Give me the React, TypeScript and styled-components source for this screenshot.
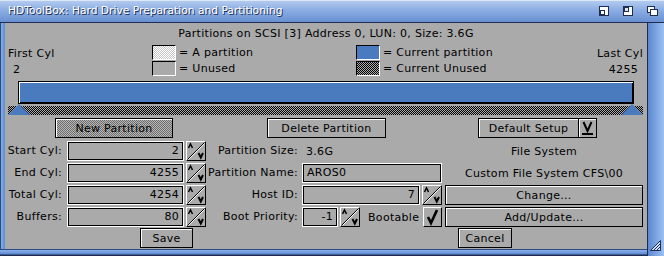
import React from "react";
import styled, { createGlobalStyle } from "styled-components";

const GRAY = "#aaaaaa";
const BLUE = "#4a7bbf";
const NAVY = "#1c2c52";

const checker = (a: string, b: string) =>
    `repeating-conic-gradient(${a} 0% 25%, ${b} 0% 50%) 0 0 / 2px 2px`;

const GlobalStyle = createGlobalStyle`
    * { box-sizing: border-box; }
    html, body { margin: 0; padding: 0; background: #6d98d8; }
`;

const Window = styled.div`
    width: 664px;
    height: 256px;
    display: grid;
    grid-template-columns: 5px 642px 17px;
    grid-template-rows: 23px 226px 7px;
    background: #6d98d8;
    font-family: "DejaVu Sans", Verdana, sans-serif;
    font-size: 11px;
    letter-spacing: 0.3px;
    color: #000;
    overflow: hidden;
`;

const TitleBar = styled.div`
    grid-column: 1 / -1;
    display: flex;
    align-items: center;
    padding: 0 6px 1px 8px;
    background: linear-gradient(180deg, #b6cdef 0%, #8caee3 45%, #6890d2 100%);
    border-bottom: 1px solid ${NAVY};
    box-shadow: inset 0 1px #dce7f8;
`;

const Title = styled.span`
    color: #fff;
    font-size: 10.7px;
    letter-spacing: 0;
    text-shadow: 1px 1px 0 ${NAVY};
    white-space: nowrap;
`;

const Gadgets = styled.div`
    margin-left: auto;
    display: flex;
    gap: 12px;
    align-items: center;

    svg {
        display: block;
    }
`;

const LeftEdge = styled.div`
    grid-row: 2 / 4;
    grid-column: 1;
    background: linear-gradient(90deg, #2c4a86 0 1px, #86aee8 1px, #5f8bd0 100%);
`;

const BottomEdge = styled.div`
    grid-row: 3;
    grid-column: 1 / 3;
    background: linear-gradient(180deg, #2c4a86 0 1px, #8cb2ec 1px, #5f8bd0 5px, ${NAVY} 6px);
`;

const RightEdge = styled.div`
    grid-row: 2 / 4;
    grid-column: 3;
    display: flex;
    align-items: flex-end;
    justify-content: center;
    padding-bottom: 5px;
    background: linear-gradient(90deg, ${NAVY} 0 1px, #5a87cf 1px, #9cc0f2 100%);
`;

const Content = styled.div`
    grid-row: 2;
    grid-column: 2;
    background: ${GRAY};
    display: flex;
    flex-direction: column;
`;

const Header = styled.div`
    margin-top: 5px;
    height: 12px;
    line-height: 12px;
    text-align: center;
    white-space: nowrap;
`;

const Legend = styled.div`
    display: grid;
    grid-template-columns: 144px 204px 1fr auto;
    grid-template-rows: 16px 16px;
    margin-top: 5px;
    padding: 0 4px 0 3px;
    align-items: center;
    white-space: nowrap;
`;

const CylValue = styled.span<{ $right?: boolean }>`
    text-align: ${({ $right }) => ($right ? "right" : "left")};
    padding: ${({ $right }) => ($right ? "0 5px 0 0" : "0 0 0 5px")};
`;

const CylLabel = styled.span<{ $right?: boolean }>`
    text-align: ${({ $right }) => ($right ? "right" : "left")};
`;

const LegendItem = styled.div`
    display: flex;
    align-items: flex-start;
    gap: 3px;
    height: 16px;
    line-height: 15px;
`;

const Swatch = styled.span<{ $fill: string }>`
    width: 24px;
    height: 15px;
    flex: none;
    border: 1px solid;
    border-color: #000 #fff #fff #000;
    background: ${({ $fill }) => $fill};
`;

const PartitionBar = styled.div`
    margin: 4px 13px 0;
    height: 23px;
    border: 1px solid #000;
    background: ${BLUE};
    box-shadow: inset 1px 1px 0 #fff, inset -1px -1px 0 #000;
`;

const Track = styled.div`
    position: relative;
    height: 11px;
    margin: 0 4px 0 3px;
    padding-top: 2px;
`;

const Strip = styled.div`
    height: 9px;
    background: ${checker("#000", GRAY)};
`;

const Knob = styled.svg<{ $side: "left" | "right" }>`
    position: absolute;
    top: 0;
    ${({ $side }) => ($side === "left" ? "left: 0;" : "right: 0;")}
    display: block;
`;

const ButtonRow = styled.div`
    display: flex;
    margin-top: 3px;
    height: 20px;
    padding-left: 50px;
`;

const Button = styled.button<{ $w: number; $ml?: number; $dither?: boolean }>`
    width: ${({ $w }) => $w}px;
    height: 20px;
    margin: 0 0 0 ${({ $ml }) => $ml ?? 0}px;
    padding: 0;
    font: inherit;
    letter-spacing: inherit;
    color: #000;
    border: 1px solid #000;
    background: ${({ $dither }) => ($dither ? checker("#6c6c6c", "#b8b8b8") : GRAY)};
    box-shadow: inset 1px 1px 0 #fff;
    text-align: center;
    white-space: nowrap;
    display: flex;
    align-items: center;
    justify-content: center;
`;

const CycleButton = styled(Button)`
    justify-content: flex-start;
`;

const CycleLabel = styled.span`
    width: 99px;
    text-align: center;
`;

const CycleGlyph = styled.span`
    flex: 1;
    height: 100%;
    display: flex;
    align-items: center;
    justify-content: center;
    border-left: 1px solid #000;
    box-shadow: inset 1px 0 0 #fff;
`;

const FormGrid = styled.div`
    display: grid;
    grid-template-columns: 62px 139px 96px 143px 198px;
    grid-auto-rows: 20px;
    row-gap: 2px;
    margin-top: 3px;
`;

const Label = styled.div<{ $pr: number }>`
    text-align: right;
    padding-right: ${({ $pr }) => $pr}px;
    line-height: 20px;
    white-space: nowrap;
`;

const FieldGroup = styled.div`
    display: flex;
    gap: 2px;
`;

const MidCell = styled.div`
    display: flex;
    align-items: center;
    padding-right: 3px;
    white-space: nowrap;
`;

const Field = styled.div<{ $w?: number; $left?: boolean }>`
    ${({ $w }) => ($w ? `width: ${$w}px;` : "flex: 1;")}
    height: 20px;
    border: 1px solid #fff;
    box-shadow: inset 0 0 0 1px #000;
    padding: 0 4px;
    line-height: 18px;
    text-align: ${({ $left }) => ($left ? "left" : "right")};
    white-space: nowrap;
`;

const Value = styled.span`
    padding-left: 4px;
`;

const BevelBox = styled.div<{ $w: number }>`
    width: ${({ $w }) => $w}px;
    height: 20px;
    flex: none;
    border: 1px solid;
    border-color: #fff #000 #000 #fff;

    svg {
        display: block;
    }
`;

const RightCell = styled.div`
    display: flex;
    align-items: center;
    justify-content: center;
    white-space: nowrap;
`;

const WideButton = styled(Button)`
    width: 198px;
`;

const BootText = styled.span`
    margin-left: 8px;
`;

const CheckBox = styled(BevelBox)`
    margin-left: auto;
`;

const BottomRow = styled.div`
    display: flex;
    margin-top: 1px;
    height: 20px;
    padding-left: 135px;
    gap: 265px;
`;

const Spinner: React.FC = () => (
    <BevelBox $w={20}>
        <svg width="18" height="18" viewBox="0 0 18 18">
            <line x1="0.5" y1="17.5" x2="17.5" y2="0.5" stroke="#000" strokeWidth="1" />
            <line x1="1.5" y1="17.5" x2="17.5" y2="1.5" stroke="#fff" strokeWidth="1" />
            <polyline points="1.5,6 3.5,2 5.5,6" fill="none" stroke="#000" strokeWidth="1.5" />
            <polyline points="11.5,11 13.8,15.5 16,11" fill="none" stroke="#000" strokeWidth="2" />
        </svg>
    </BevelBox>
);

const Triangle: React.FC<{ side: "left" | "right" }> = ({ side }) => (
    <Knob $side={side} width="22" height="11" viewBox="0 0 22 11">
        <polygon points="11,0 22,11 0,11" fill={BLUE} />
    </Knob>
);

export default function App() {
    return (
        <>
            <GlobalStyle />
            <Window>
                <TitleBar>
                    <Title>HDToolBox: Hard Drive Preparation and Partitioning</Title>
                    <Gadgets>
                        <svg width="10" height="10" viewBox="0 0 10 10">
                            <rect x="0.5" y="0.5" width="9" height="9" fill="#fff" stroke={NAVY} />
                            <rect x="1" y="4" width="5" height="5" fill={NAVY} />
                            <rect x="2" y="5" width="3" height="3" fill="#fff" />
                        </svg>
                        <svg width="10" height="10" viewBox="0 0 10 10" style={{ marginLeft: 2 }}>
                            <rect x="0.5" y="0.5" width="9" height="9" fill="#fff" stroke={NAVY} />
                            <rect x="1.5" y="1.5" width="4" height="4" fill="#dfe6f0" stroke={NAVY} />
                        </svg>
                        <svg width="11" height="10" viewBox="0 0 11 10" style={{ marginLeft: 2 }}>
                            <rect x="0.5" y="0.5" width="7" height="6" fill="#fff" stroke={NAVY} />
                            <rect x="3.5" y="3.5" width="7" height="6" fill="#fff" stroke={NAVY} />
                        </svg>
                    </Gadgets>
                </TitleBar>
                <LeftEdge />
                <Content>
                    <Header>Partitions on SCSI [3] Address 0, LUN: 0, Size: 3.6G</Header>
                    <Legend>
                        <CylLabel>First Cyl</CylLabel>
                        <LegendItem>
                            <Swatch $fill={checker("#ffffff", "#c8c8c8")} />= A partition
                        </LegendItem>
                        <LegendItem>
                            <Swatch $fill={BLUE} />= Current partition
                        </LegendItem>
                        <CylLabel $right>Last Cyl</CylLabel>
                        <CylValue>2</CylValue>
                        <LegendItem>
                            <Swatch $fill={GRAY} />= Unused
                        </LegendItem>
                        <LegendItem>
                            <Swatch $fill={checker("#000", GRAY)} />= Current Unused
                        </LegendItem>
                        <CylValue $right>4255</CylValue>
                    </Legend>
                    <PartitionBar />
                    <Track>
                        <Strip />
                        <Triangle side="left" />
                        <Triangle side="right" />
                    </Track>
                    <ButtonRow>
                        <Button $w={118} $dither>New Partition</Button>
                        <Button $w={119} $ml={94}>Delete Partition</Button>
                        <CycleButton $w={119} $ml={92}>
                            <CycleLabel>Default Setup</CycleLabel>
                            <CycleGlyph>
                                <svg width="11" height="14" viewBox="0 0 11 14">
                                    <polyline points="1.5,1 5.5,10 9.5,1" fill="none" stroke="#000" strokeWidth="2" />
                                    <rect x="0" y="12" width="11" height="2" fill="#000" />
                                </svg>
                            </CycleGlyph>
                        </CycleButton>
                    </ButtonRow>
                    <FormGrid>
                        <Label $pr={5}>Start Cyl:</Label>
                        <FieldGroup>
                            <Field>2</Field>
                            <Spinner />
                        </FieldGroup>
                        <Label $pr={4}>Partition Size:</Label>
                        <MidCell>
                            <Value>3.6G</Value>
                        </MidCell>
                        <RightCell>File System</RightCell>

                        <Label $pr={5}>End Cyl:</Label>
                        <FieldGroup>
                            <Field>4255</Field>
                            <Spinner />
                        </FieldGroup>
                        <Label $pr={4}>Partition Name:</Label>
                        <MidCell>
                            <Field $left>AROS0</Field>
                        </MidCell>
                        <RightCell>Custom File System CFS\00</RightCell>

                        <Label $pr={5}>Total Cyl:</Label>
                        <FieldGroup>
                            <Field>4254</Field>
                            <Spinner />
                        </FieldGroup>
                        <Label $pr={4}>Host ID:</Label>
                        <MidCell>
                            <FieldGroup style={{ flex: 1 }}>
                                <Field>7</Field>
                                <Spinner />
                            </FieldGroup>
                        </MidCell>
                        <RightCell>
                            <WideButton $w={198}>Change...</WideButton>
                        </RightCell>

                        <Label $pr={5}>Buffers:</Label>
                        <FieldGroup>
                            <Field>80</Field>
                            <Spinner />
                        </FieldGroup>
                        <Label $pr={4}>Boot Priority:</Label>
                        <MidCell>
                            <FieldGroup>
                                <Field $w={36}>-1</Field>
                                <Spinner />
                            </FieldGroup>
                            <BootText>Bootable</BootText>
                            <CheckBox $w={19}>
                                <svg width="17" height="18" viewBox="0 0 17 18">
                                    <polyline points="4,9 7,15 13,2" fill="none" stroke="#000" strokeWidth="2.6" />
                                </svg>
                            </CheckBox>
                        </MidCell>
                        <RightCell>
                            <WideButton $w={198}>Add/Update...</WideButton>
                        </RightCell>
                    </FormGrid>
                    <BottomRow>
                        <Button $w={53}>Save</Button>
                        <Button $w={54}>Cancel</Button>
                    </BottomRow>
                </Content>
                <RightEdge>
                    <svg width="11" height="11" viewBox="0 0 11 11">
                        <polygon points="10.5,0.5 10.5,10.5 0.5,10.5" fill="#cfe0f8" stroke={NAVY} />
                        <line x1="4" y1="10" x2="10" y2="4" stroke={NAVY} />
                        <line x1="7" y1="10" x2="10" y2="7" stroke={NAVY} />
                    </svg>
                </RightEdge>
                <BottomEdge />
            </Window>
        </>
    );
}
